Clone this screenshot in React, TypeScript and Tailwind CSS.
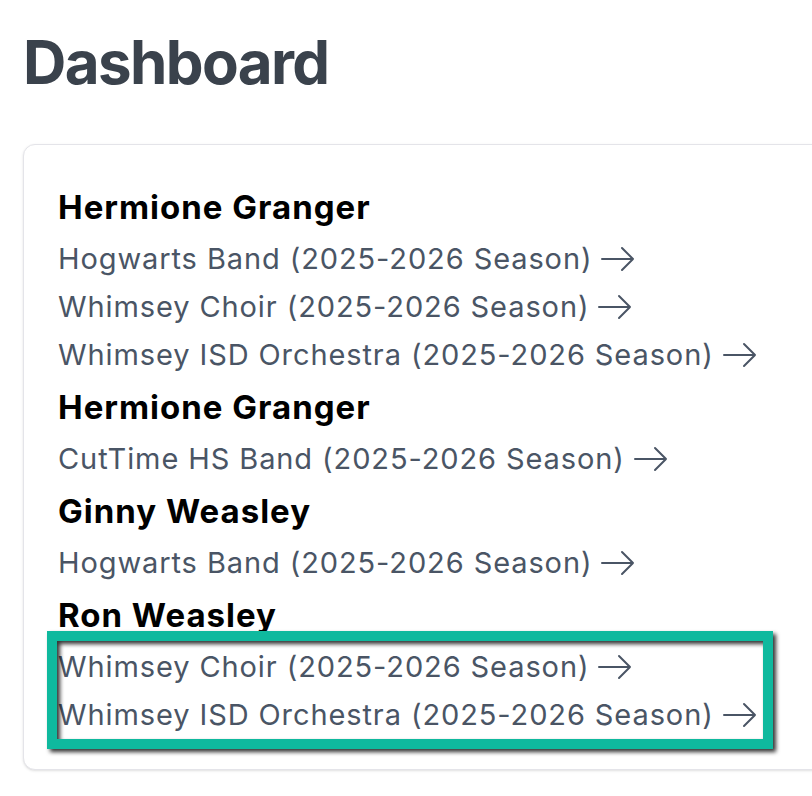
const students = [
  {
    name: 'Hermione Granger',
    ensembles: [
      'Hogwarts Band (2025-2026 Season)',
      'Whimsey Choir (2025-2026 Season)',
      'Whimsey ISD Orchestra (2025-2026 Season)',
    ],
  },
  { name: 'Hermione Granger', ensembles: ['CutTime HS Band (2025-2026 Season)'] },
  { name: 'Ginny Weasley', ensembles: ['Hogwarts Band (2025-2026 Season)'] },
  {
    name: 'Ron Weasley',
    ensembles: ['Whimsey Choir (2025-2026 Season)', 'Whimsey ISD Orchestra (2025-2026 Season)'],
  },
]

function Arrow() {
  return (
    <svg width="34" height="26" viewBox="0 0 34 26" fill="none" className="ml-[9px] shrink-0">
      <path d="M1 13h31M21 2l11 11-11 11" stroke="currentColor" strokeWidth="2" strokeLinecap="round" strokeLinejoin="round" />
    </svg>
  )
}

export default function App() {
  return (
    <div className="min-h-[796px] overflow-hidden bg-white pl-[23px] pt-[28px] font-['Inter',sans-serif]">
      <h1 className="text-[60px] font-bold leading-[68px] tracking-[-1.6px] text-[#3a424c]">Dashboard</h1>

      <div className="relative mt-[48px] -mr-[12px] rounded-[12px] border border-[#e4e4e9] bg-white px-[34px] pt-[34px] pb-[30px] shadow-sm">
        <div className="flex flex-col">
          {students.map((s, i) => (
            <div key={i}>
              <div className="text-[33px] font-bold leading-[56px] tracking-[1px] text-black">{s.name}</div>
              {s.ensembles.map((e) => (
                <a key={e} href="#" className="flex items-center text-[29px] leading-[48px] tracking-[0.9px] text-[#4a5565]">
                  <span>{e}</span>
                  <Arrow />
                </a>
              ))}
            </div>
          ))}
        </div>

        {/* highlight annotation */}
        <div className="pointer-events-none absolute left-[23px] top-[486px] h-[118px] w-[726px] border-[10px] border-[#0fb99e] drop-shadow-[3px_3px_2px_rgba(0,0,0,0.8)]" />
      </div>
    </div>
  )
}
